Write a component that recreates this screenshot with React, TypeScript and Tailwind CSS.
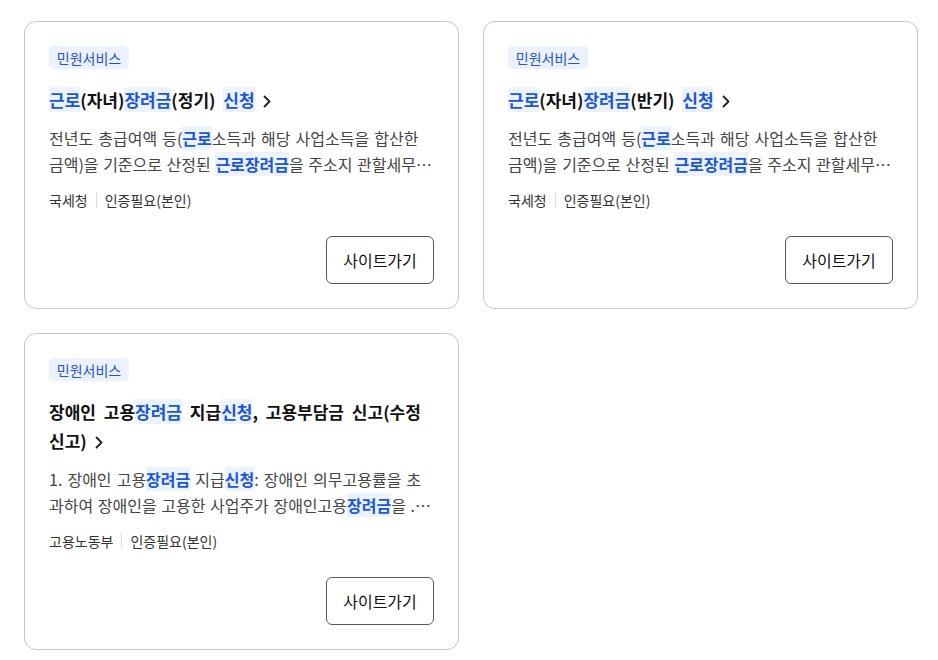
import React from "react";

const FONT = { fontFamily: '"Noto Sans CJK KR", "Noto Sans", sans-serif' };

function H({ children }: { children: React.ReactNode }) {
  return <span className="bg-[#ecf2fe] text-[#1a56db]">{children}</span>;
}
function HB({ children }: { children: React.ReactNode }) {
  return <span className="bg-[#ecf2fe] text-[#1a56db] font-bold">{children}</span>;
}

function Chevron() {
  return (
    <svg width="14" height="15" viewBox="0 0 14 15" className="inline-block ml-[5px] align-[-2px]">
      <path d="M4.5 2.5 L9.5 7.5 L4.5 12.5" fill="none" stroke="#222" strokeWidth="1.8" strokeLinecap="round" strokeLinejoin="round" />
    </svg>
  );
}

type CardProps = {
  title: React.ReactNode;
  line1: React.ReactNode;
  line2: React.ReactNode;
  org: string;
};

function Card({ title, line1, line2, org }: CardProps) {
  return (
    <div className="border border-[#c4c7cc] rounded-[12px] bg-white px-6 pt-6 pb-6 flex flex-col">
      <div className="flex">
        <span className="flex items-center justify-center w-[80px] h-[23px] rounded-[5px] bg-[#ebf1fd] text-[#2456c7] text-[14px] leading-none">
          민원서비스
        </span>
      </div>
      <div className="mt-4 text-[17px] leading-[29px] font-bold text-[#111] [word-spacing:4px]">{title}</div>
      <div className="mt-[11px] text-[16px] leading-[26px] text-[#444] [word-spacing:1.5px]">
        <div className="whitespace-nowrap">{line1}</div>
        <div className="whitespace-nowrap [word-spacing:1px]">{line2}</div>
      </div>
      <div className="mt-[13px] flex items-center text-[14px] leading-[20px] text-[#333]">
        <span>{org}</span>
        <span className="mx-2 w-px h-[14px] bg-[#d6d8dc]" />
        <span>인증필요(본인)</span>
      </div>
      <div className="mt-[26px] flex justify-end">
        <button className="w-[108px] h-[48px] border border-[#555b63] rounded-[6px] text-[16px] text-[#111] bg-white">
          사이트가기
        </button>
      </div>
    </div>
  );
}

export default function App() {
  return (
    <div className="min-h-[660px] bg-white pt-[21px] pl-6" style={FONT}>
      <div className="grid grid-cols-[435px_435px] gap-x-6 gap-y-6 items-start">
        <Card
          title={
            <>
              <H>근로</H>(자녀)<H>장려금</H>(정기) <H>신청</H>
              <Chevron />
            </>
          }
          line1={
            <>
              전년도 총급여액 등(<HB>근로</HB>소득과 해당 사업소득을 합산한
            </>
          }
          line2={
            <>
              금액)을 기준으로 산정된 <HB>근로장려금</HB>을 주소지 관할세무…
            </>
          }
          org="국세청"
        />
        <Card
          title={
            <>
              <H>근로</H>(자녀)<H>장려금</H>(반기) <H>신청</H>
              <Chevron />
            </>
          }
          line1={
            <>
              전년도 총급여액 등(<HB>근로</HB>소득과 해당 사업소득을 합산한
            </>
          }
          line2={
            <>
              금액)을 기준으로 산정된 <HB>근로장려금</HB>을 주소지 관할세무…
            </>
          }
          org="국세청"
        />
        <Card
          title={
            <>
              장애인 고용<H>장려금</H> 지급<H>신청</H>, 고용부담금 신고(수정 신고)
              <Chevron />
            </>
          }
          line1={
            <>
              1. 장애인 고용<HB>장려금</HB> 지급<HB>신청</HB>: 장애인 의무고용률을 초
            </>
          }
          line2={
            <>
              과하여 장애인을 고용한 사업주가 장애인고용<HB>장려금</HB>을 .…
            </>
          }
          org="고용노동부"
        />
      </div>
    </div>
  );
}
